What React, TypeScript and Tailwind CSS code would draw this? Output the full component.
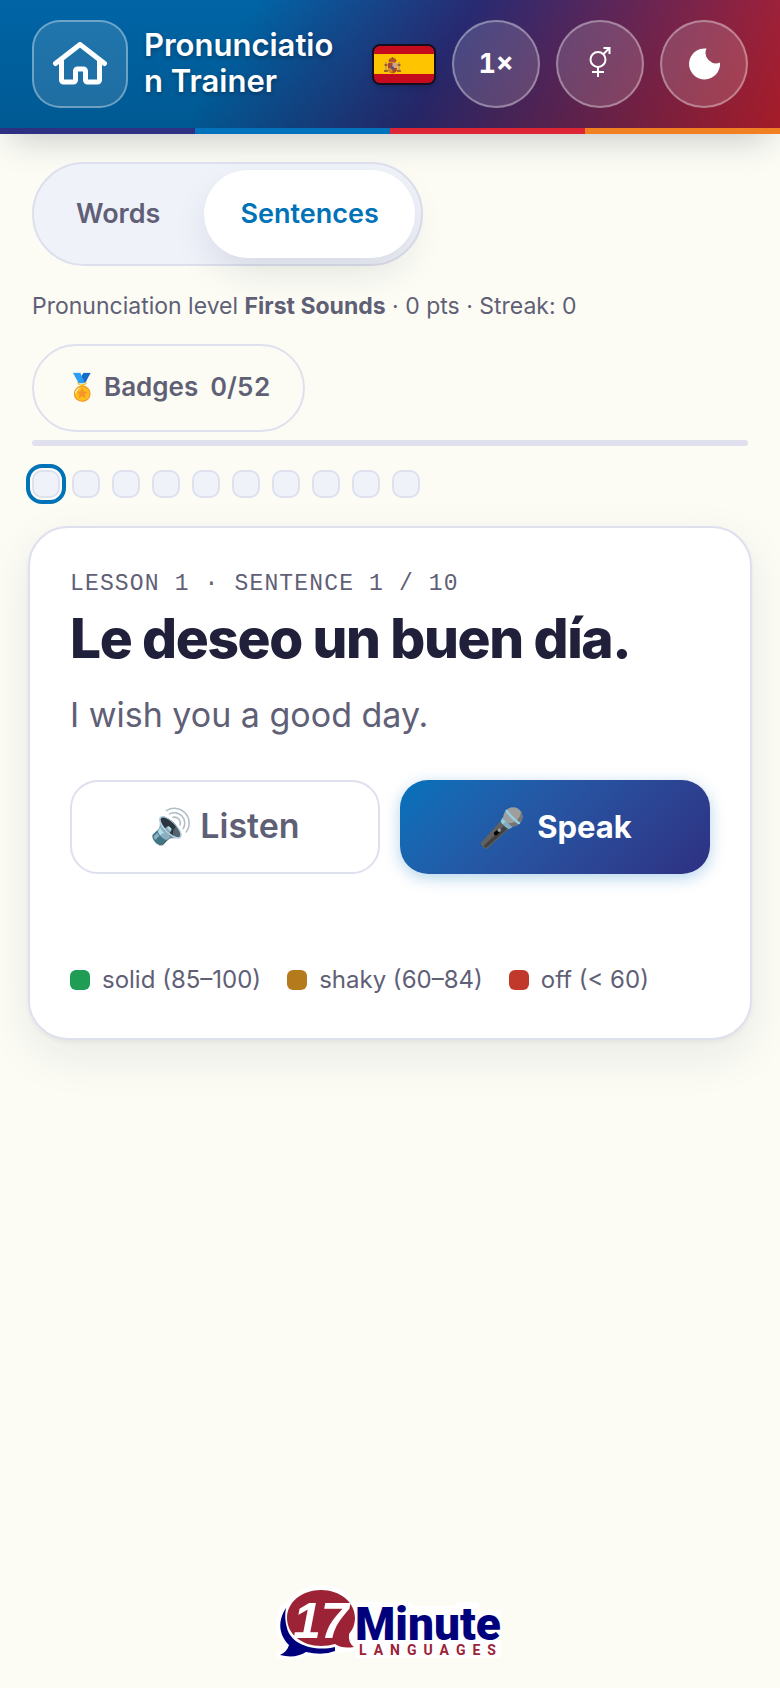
import { useState } from 'react';

const STEPS = 10;

const MODES = [
  { id: 'words', label: 'Words' },
  { id: 'sentences', label: 'Sentences' },
];

const LEGEND = [
  { label: 'solid (85–100)', color: 'bg-[#1f9d55]' },
  { label: 'shaky (60–84)', color: 'bg-[#b57a1c]' },
  { label: 'off (< 60)', color: 'bg-[#c0392b]' },
];

const roundButton =
  'flex size-22 shrink-0 items-center justify-center rounded-full border-2 border-white/35 bg-white/15 text-white';

function HomeIcon() {
  return (
    <svg viewBox="0 0 56 44" className="h-11 w-14" fill="none" stroke="currentColor" strokeWidth="5" strokeLinecap="round" strokeLinejoin="round" aria-hidden="true">
      <path d="M3.500 21.500 28 2.500l24.500 19" />
      <path d="M9.500 19V38a2 2 0 0 0 2 2h10a2 2 0 0 0 2-2V29a2 2 0 0 1 2-2h6a2 2 0 0 1 2 2v9a2 2 0 0 0 2 2h10a2 2 0 0 0 2-2V19" />
    </svg>
  );
}

function GenderIcon() {
  return (
    <svg viewBox="0 0 24 32" className="mb-1 h-8 w-6" fill="none" stroke="currentColor" strokeWidth="2" aria-hidden="true">
      <circle cx="10" cy="13.500" r="7.500" />
      <path d="M15.500 8 21 2.500M15.500 2H21.500V8M10 21V31M4 26H16" />
    </svg>
  );
}

function MoonIcon() {
  return (
    <svg viewBox="0 0 32 32" className="size-8" fill="currentColor" aria-hidden="true">
      <path d="M18.500 .5A15.500 15.500 0 1 0 32 14.500 10.500 10.500 0 0 1 18.500 .5Z" />
    </svg>
  );
}

function SpainFlag() {
  return (
    <svg viewBox="0 0 60 37" className="h-full w-full" preserveAspectRatio="none" role="img" aria-label="Spanish">
      <rect width="60" height="37" fill="#c60b1e" />
      <rect y="8" width="60" height="20" fill="#ffc400" />
      <rect x="11" y="16" width="2" height="10" fill="#c9a15a" />
      <rect x="24" y="16" width="2" height="10" fill="#c9a15a" />
      <path d="M10 25h4M23 25h4M10.500 19h3M23.500 19h3" stroke="#8a4a2a" strokeWidth="1.500" />
      <path d="M14.500 15q0-3 4-3t4 3l-1 1.500h-6z" fill="#b5522e" />
      <circle cx="18.500" cy="12" r="1" fill="#8a5a20" />
      <path d="M14 17h9v6q0 3.500-4.500 4.500Q14 26.500 14 23z" fill="#a8442f" />
      <path d="M18.500 17H23v5h-4.500z" fill="#c9a39a" />
      <path d="M14 22h4.500v5Q14 26 14 23z" fill="#d08a2a" />
      <circle cx="18.500" cy="22" r="1.500" fill="#4a4f8a" />
    </svg>
  );
}

function Header() {
  return (
    <header className="shadow-[0_16px_32px_-12px_rgba(30,30,60,0.25)]">
      <div className="flex items-center gap-4 bg-[linear-gradient(180deg,rgba(0,0,0,0.12),rgba(0,0,0,0.22)),linear-gradient(120deg,#0072bc_0%,#0072bc_30%,#2e3082_56%,#d22333_100%)] px-8 py-5">
        <button type="button" aria-label="Home" className="flex h-22 w-24 shrink-0 items-center justify-center rounded-[28px] border-2 border-white/35 bg-white/12 text-white">
          <HomeIcon />
        </button>
        <h1 className="mr-3 min-w-0 flex-1 pb-0.5 text-[31px] leading-9 font-semibold wrap-anywhere text-white text-shadow-[0_2px_4px_rgba(0,0,0,0.3)]">
          Pronunciation Trainer
        </h1>
        <div className="h-[41px] w-16 shrink-0 overflow-hidden rounded-lg border-2 border-[#160e1c] shadow-md">
          <SpainFlag />
        </div>
        <button type="button" aria-label="Playback speed" className={`${roundButton} text-[27px] font-bold tabular-nums`}>
          1×
        </button>
        <button type="button" aria-label="Voice" className={roundButton}>
          <GenderIcon />
        </button>
        <button type="button" aria-label="Dark mode" className={roundButton}>
          <MoonIcon />
        </button>
      </div>
      <div className="grid h-1.5 grid-cols-4">
        <div className="bg-[#2e3082]" />
        <div className="bg-[#0072bc]" />
        <div className="bg-[#de2535]" />
        <div className="bg-[#f08021]" />
      </div>
    </header>
  );
}

function ModeTabs() {
  const [mode, setMode] = useState('sentences');
  return (
    <div className="inline-flex gap-2 rounded-full border-2 border-[#dddfec] bg-[#eff2f9] p-1.5">
      {MODES.map((m) => (
        <button
          key={m.id}
          type="button"
          aria-pressed={mode === m.id}
          onClick={() => setMode(m.id)}
          className={`h-22 rounded-full px-9 text-[27px] font-semibold ${
            mode === m.id ? 'bg-white text-[#0072b8] shadow-[0_16px_40px_-8px_rgba(30,30,60,0.14)]' : 'text-[#5f6076]'
          }`}
        >
          {m.label}
        </button>
      ))}
    </div>
  );
}

function LessonCard() {
  return (
    <section className="-mx-1 mt-7 rounded-[40px] border-2 border-[#dfe0ee] bg-white p-10 shadow-[0_2px_4px_rgba(30,30,60,0.06),0_16px_48px_rgba(30,30,60,0.08)]">
      <p className="font-['Liberation_Mono',monospace] text-[23px] leading-8 tracking-wider text-[#5f6076] uppercase">
        Lesson 1 · Sentence 1 / 10
      </p>
      <h2 className="mt-1.5 text-[55px] leading-16 font-extrabold tracking-tight text-[#20203a]">Le deseo un buen día.</h2>
      <p className="mt-5 text-[34px] leading-[50px] text-[#5f6076]">I wish you a good day.</p>
      <div className="mt-10 grid grid-cols-2 gap-5">
        <button type="button" className="flex h-[94px] items-center justify-center gap-2 rounded-[28px] border-2 border-[#dfe0ee] pb-1 text-[34px] font-semibold text-[#5f6076]">
          <span>🔊</span> Listen
        </button>
        <button type="button" className="flex h-[94px] items-center justify-center gap-3 rounded-[28px] bg-linear-135 from-[#0072bc] to-[#2e3082] text-[31px] font-bold text-white shadow-[0_4px_16px_rgba(0,114,188,0.3)]">
          <span className="text-[38px]">🎤</span> Speak
        </button>
      </div>
      <ul className="mt-22 flex flex-wrap gap-x-6.5 text-2xl leading-9 text-[#5f6076]">
        {LEGEND.map((item) => (
          <li key={item.label} className="flex items-center gap-3">
            <span className={`size-5 rounded-md ${item.color}`} />
            {item.label}
          </li>
        ))}
      </ul>
    </section>
  );
}

function BrandLogo() {
  return (
    <svg viewBox="0 -6 230 86" className="h-[86px] w-[230px]" role="img" aria-label="17 Minute Languages">
      <g stroke="#fff" strokeWidth="8" strokeLinejoin="round" fill="#fff">
        <ellipse cx="46" cy="30" rx="35" ry="29" />
        <path d="M9 20C2 32 3 47 14 57Q12 63 5 66Q20 70 32 63Q48 67 62 61L79 59Q73 55 72 45z" />
        <path d="M84 18H134V22H184V18H200V26H222V66H84z" />
      </g>
      <path d="M11 20C3 32 3 46 14 57Q12 64 5 67Q20 71 31 64Q48 68 60 63V59C40 64 16 57 12 40Q9 30 11 20Z" fill="#00007c" />
      <path d="M46 2C65 2 80 14 80 30Q80 39 74 46Q73 55 79 59Q67 61 60 56Q54 58 46 58C27 58 12 46 12 30S27 2 46 2Z" fill="#9b2335" />
      <text x="18" y="50" fill="#fff" className="font-['Liberation_Sans',sans-serif] text-[50px] font-bold italic">17</text>
      <text x="80" y="52" fill="#00007c" className="font-[Roboto,sans-serif] text-[46px] font-black">Minute</text>
      <text x="84" y="67" fill="#9b2335" className="font-[Roboto,sans-serif] text-sm font-bold tracking-[7px]">LANGUAGES</text>
    </svg>
  );
}

export default function App() {
  return (
    <div className="flex min-h-screen flex-col bg-[#fcfcf5] font-[Inter,sans-serif] text-[#5f6076]">
      <Header />
      <main className="flex-1 px-8 pt-7">
        <ModeTabs />
        <p className="mt-5 text-[23px] leading-10">
          Pronunciation level <strong>First Sounds</strong> · 0 pts · Streak: 0
        </p>
        <button type="button" className="mt-4.5 flex h-22 items-center rounded-full border-2 border-[#dfe0ee] px-8 pb-1 text-[26px] font-semibold">
          <span className="mr-1.5">🏅</span>
          Badges
          <span className="ml-3 tabular-nums">0/52</span>
        </button>
        <div role="progressbar" aria-label="Lesson progress" aria-valuenow={0} aria-valuemax={STEPS} className="mt-2 h-1.5 rounded-full bg-[#e1e0ee]" />
        <div className="mt-6 flex gap-3">
          {Array.from({ length: STEPS }, (_, i) => (
            <button
              key={i}
              type="button"
              aria-label={`Sentence ${i + 1}`}
              className={`size-7 rounded-[10px] border-2 border-[#dfe0ee] bg-[#eff2f9] ${
                i === 0 ? 'outline-4 outline-offset-2 outline-[#0072b8]' : ''
              }`}
            />
          ))}
        </div>
        <LessonCard />
      </main>
      <footer className="flex justify-center pb-5">
        <BrandLogo />
      </footer>
    </div>
  );
}
